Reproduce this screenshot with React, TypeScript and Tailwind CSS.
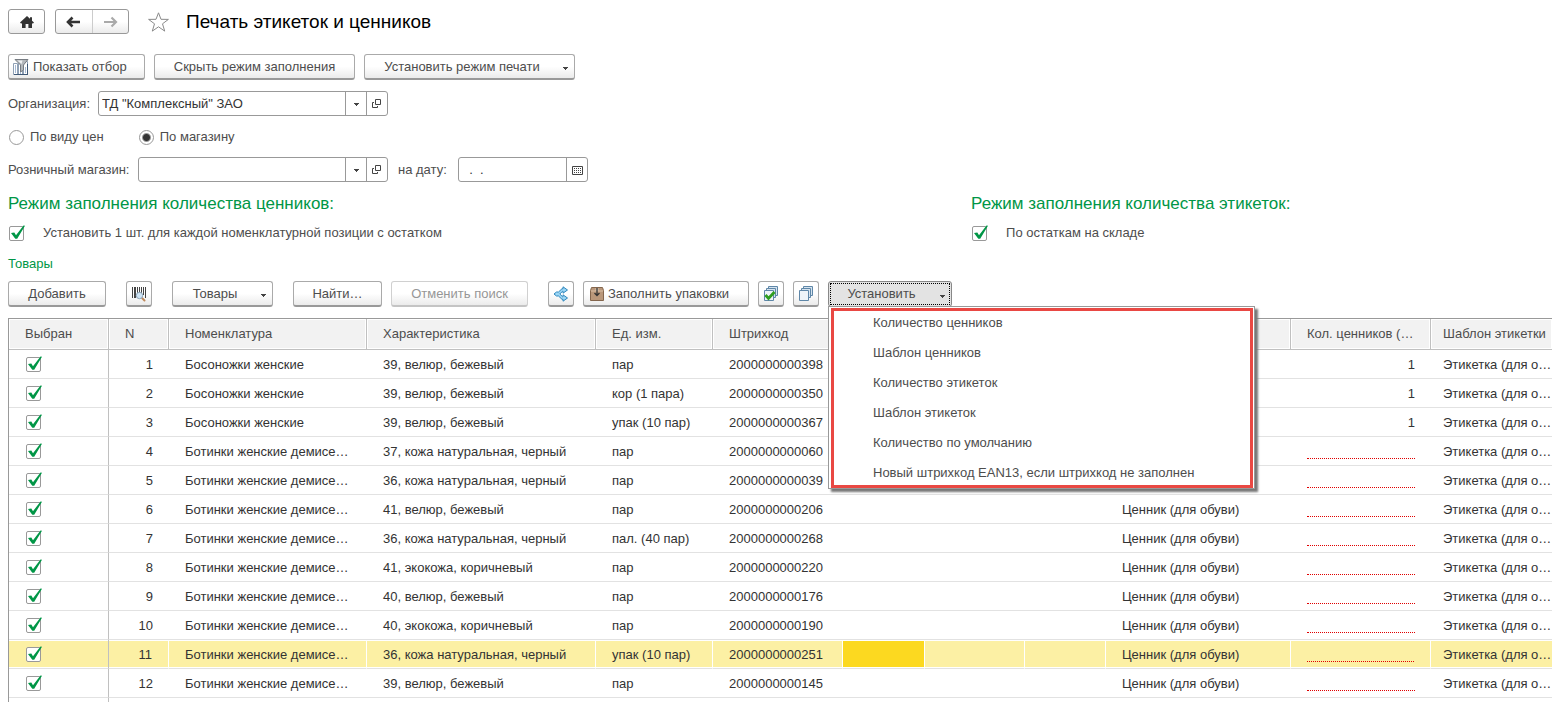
import { ReactNode } from "react";
import clsx from "clsx";

type Item = {
  name: string;
  feature: string;
  unit: string;
  barcode: string;
  tag?: string;
  count?: number;
};

const BOOTS = "Ботинки женские демисе…";
const SANDALS = "Босоножки женские";
const TAG = "Ценник (для обуви)";

const items: Item[] = [
  { name: SANDALS, feature: "39, велюр, бежевый", unit: "пар", barcode: "2000000000398", count: 1 },
  { name: SANDALS, feature: "39, велюр, бежевый", unit: "кор (1 пара)", barcode: "2000000000350", count: 1 },
  { name: SANDALS, feature: "39, велюр, бежевый", unit: "упак (10 пар)", barcode: "2000000000367", count: 1 },
  { name: BOOTS, feature: "37, кожа натуральная, черный", unit: "пар", barcode: "2000000000060" },
  { name: BOOTS, feature: "36, кожа натуральная, черный", unit: "пар", barcode: "2000000000039" },
  { name: BOOTS, feature: "41, велюр, бежевый", unit: "пар", barcode: "2000000000206", tag: TAG },
  { name: BOOTS, feature: "36, кожа натуральная, черный", unit: "пал. (40 пар)", barcode: "2000000000268", tag: TAG },
  { name: BOOTS, feature: "41, экокожа, коричневый", unit: "пар", barcode: "2000000000220", tag: TAG },
  { name: BOOTS, feature: "40, велюр, бежевый", unit: "пар", barcode: "2000000000176", tag: TAG },
  { name: BOOTS, feature: "40, экокожа, коричневый", unit: "пар", barcode: "2000000000190", tag: TAG },
  { name: BOOTS, feature: "36, кожа натуральная, черный", unit: "упак (10 пар)", barcode: "2000000000251", tag: TAG },
  { name: BOOTS, feature: "39, велюр, бежевый", unit: "пар", barcode: "2000000000145", tag: TAG },
];

const SELECTED = 10;

const menuItems = [
  "Количество ценников",
  "Шаблон ценников",
  "Количество этикеток",
  "Шаблон этикеток",
  "Количество по умолчанию",
  "Новый штрихкод EAN13, если штрихкод не заполнен",
];

const columns = [
  { title: "Выбран", width: "w-[100px]" },
  { title: "N", width: "w-[60px]" },
  { title: "Номенклатура", width: "w-[198px]" },
  { title: "Характеристика", width: "w-[229px]" },
  { title: "Ед. изм.", width: "w-[117px]" },
  { title: "Штрихкод", width: "w-[130px]" },
  { title: "", width: "w-[82px]" },
  { title: "", width: "w-[100px]" },
  { title: "", width: "w-[81px]" },
  { title: "", width: "w-[185px]" },
  { title: "Кол. ценников (…", width: "w-[140px]" },
  { title: "Шаблон этикетки", width: "w-auto" },
];

function Caret() {
  return (
    <svg width="5" height="3" viewBox="0 0 5 3" className="shrink-0" aria-hidden="true">
      <path d="M0 0h5v1H4v1H3v1H2V2H1V1H0z" fill="#444" />
    </svg>
  );
}

function HomeIcon() {
  return (
    <svg width="16" height="14" viewBox="0 0 16 14" aria-hidden="true">
      <path d="M8 1 1 7.600l1.200 1.100L3 8v5h3.600V9h2.800v4H13V8l.8.7L15 7.600l-2-1.900V2.200h-2v1.600z" fill="#333" />
    </svg>
  );
}

function ArrowIcon({ right = false }: { right?: boolean }) {
  return (
    <svg width="15" height="12" viewBox="0 0 15 12" aria-hidden="true">
      {right ? (
        <path d="M1 6h11.500M8.500 1.500 13 6l-4.500 4.500" fill="none" stroke="#aaa" strokeWidth="2.200" />
      ) : (
        <path d="M14 6H2.500M6.500 1.500 2 6l4.500 4.500" fill="none" stroke="#333" strokeWidth="2.600" />
      )}
    </svg>
  );
}

function StarIcon() {
  return (
    <svg width="23" height="22" viewBox="0 0 23 22" aria-hidden="true">
      <path
        d="M11.500 1.800 14 8.300l7.400.1-5.900 4.400 2.200 7.300-6.200-4.300-6.200 4.300 2.200-7.300L1.600 8.400 9 8.300z"
        fill="#fff"
        stroke="#8a8a8a"
      />
    </svg>
  );
}

function FilterIcon() {
  return (
    <svg width="16" height="16" viewBox="0 0 16 16" aria-hidden="true">
      <path d="M.5 4.500h4v11h-4zM5.500 4.500h4v11h-4zM10.500 2.500h4v13h-4z" fill="#fff" stroke="#8fa0b5" />
      <path d="M2 7h1M2 9h1M2 11h1M2 13h1M12 9h1M12 11h1M12 13h1M7 14h1" stroke="#4f79ad" />
      <path d="M1 15.500h14M14.500 5v11" stroke="#3f5876" />
      <path d="M2 .5h13L10.500 6v5l-3 2V6z" fill="#b4b8bc" stroke="#777c82" />
      <path d="M4.500 1.500h5L8.500 5z" fill="#eef0f2" />
    </svg>
  );
}

function OpenIcon() {
  return (
    <svg width="10" height="10" viewBox="0 0 10 10" aria-hidden="true">
      <path d="M3.500.5h5v5h-5zM2 3.500H.5v5h5V7" fill="none" stroke="#444" />
    </svg>
  );
}

function CalendarIcon() {
  return (
    <svg width="11" height="9" viewBox="0 0 11 9" aria-hidden="true">
      <path d="M.5.5h10v8H.5z" fill="#fff" stroke="#444" />
      <path d="M2 2.500h7M2 4.500h7M2 6.500h7" stroke="#444" strokeDasharray="1 1" />
    </svg>
  );
}

function BarcodeIcon() {
  return (
    <svg width="16" height="16" viewBox="0 0 16 16" aria-hidden="true">
      <path d="M1 1h1v11H1zM3 1h2v11H3zM6 1h1v9H6zM8 1h1v6H8zM10 1h1v6h-1zM12 1h1v8h-1zM14 1h1v11h-1z" fill="#444" />
      <path d="m11 12 2.500 2.500" stroke="#c08a5c" strokeWidth="2" strokeLinecap="round" />
      <circle cx="8.500" cy="9.500" r="3.200" fill="#cfe5f6" stroke="#8ea5b8" />
    </svg>
  );
}

function ShareIcon() {
  return (
    <svg width="16" height="16" viewBox="0 0 16 16" aria-hidden="true">
      <path
        d="M1 8 3.500 6h2l3.500-3.300h1V.8L14.500 4 10 7.200V5.300H9.500L6.800 8l2.700 2.700h.5V8.800l4.500 3.200-4.500 3.200v-1.900H9L5.500 10h-2z"
        fill="#9bd6f5"
        stroke="#2f86bd"
      />
    </svg>
  );
}

function PackageIcon() {
  return (
    <svg width="14" height="14" viewBox="0 0 14 14" aria-hidden="true">
      <path d="M1.500.5h11l1 3v10H.5v-10z" fill="#b9977a" stroke="#84664d" />
      <path d="M1 4h12" stroke="#d9bfa6" />
      <path d="M5.500 1h3v3h-3z" fill="#d8c5b1" />
      <path d="M7 1v7M4.500 6 7 8.500 9.500 6" fill="none" stroke="#333" strokeWidth="1.300" />
    </svg>
  );
}

function SheetsIcon({ checked = false }: { checked?: boolean }) {
  return (
    <svg width="16" height="16" viewBox="0 0 16 16" aria-hidden="true">
      <path d="M5.500.5h9v9h-9z" fill="#d5e3ef" stroke="#5f87a8" />
      <path d="M3.500 2.500h9v9h-9z" fill="#d5e3ef" stroke="#5f87a8" />
      <path d="M1.500 4.500h9v10h-9z" fill="#eef4f9" stroke="#5f87a8" />
      {checked && <path d="m2.500 9 3 3.500 6-6.500" fill="none" stroke="#2f9e1f" strokeWidth="2.800" />}
    </svg>
  );
}

type ButtonProps = {
  children: ReactNode;
  className?: string;
  label?: string;
  dropdown?: boolean;
  disabled?: boolean;
};

function Button({ children, className, label, dropdown, disabled }: ButtonProps) {
  return (
    <button
      type="button"
      aria-label={label}
      disabled={disabled}
      className={clsx(
        "flex h-[26px] shrink-0 items-center justify-center rounded-[3px] border bg-linear-to-b from-white from-50% to-[#ebebeb]",
        disabled
          ? "border-[#d0d0d0] border-b-2 border-b-[#c4c4c4] text-[#969696]"
          : "border-[#aaa] border-b-2 border-b-[#999]",
        dropdown && "pr-[6px]",
        className,
      )}
    >
      {dropdown ? <span className="grow pr-1">{children}</span> : children}
      {dropdown && (
        <span className="pt-1">
          <Caret />
        </span>
      )}
    </button>
  );
}

function Checkbox({ label, id }: { label?: string; id?: string }) {
  return (
    <span className="relative block size-[15px] shrink-0">
      <input
        type="checkbox"
        id={id}
        aria-label={label}
        defaultChecked
        className="peer block size-[15px] appearance-none rounded-[2px] border border-[#999] bg-white"
      />
      <svg
        width="17"
        height="16"
        viewBox="0 0 17 16"
        className="pointer-events-none absolute -top-px left-0 hidden peer-checked:block"
        aria-hidden="true"
      >
        <path d="M2 8 5.300 7.500 7 10.200 14.500.5 16 .8 8.200 13.800H6.300z" fill="#009646" />
      </svg>
    </span>
  );
}

function Radio({ id, label, checked = false }: { id: string; label: string; checked?: boolean }) {
  return (
    <div className="flex items-center gap-[6px]">
      <input
        type="radio"
        name="price-source"
        id={id}
        defaultChecked={checked}
        className="size-[15px] appearance-none rounded-full border border-[#999] bg-white checked:bg-[radial-gradient(circle,#333_0_3px,#fff_5px)]"
      />
      <label htmlFor={id}>{label}</label>
    </div>
  );
}

type FieldProps = {
  id: string;
  value?: string;
  className: string;
  children: ReactNode;
};

function Field({ id, value, className, children }: FieldProps) {
  return (
    <div className={clsx("flex h-[25px] rounded-[3px] border border-[#999] bg-white", className)}>
      <input
        id={id}
        type="text"
        defaultValue={value}
        className="min-w-0 grow rounded-[3px] bg-transparent px-[3px] whitespace-pre text-[#333] outline-none"
      />
      {children}
    </div>
  );
}

function FieldButton({ label, children }: { label: string; children: ReactNode }) {
  return (
    <button
      type="button"
      aria-label={label}
      className="flex w-[21px] shrink-0 items-center justify-center border-l border-[#999] pt-px"
    >
      {children}
    </button>
  );
}

function ReferenceButtons() {
  return (
    <>
      <FieldButton label="Выбрать">
        <Caret />
      </FieldButton>
      <FieldButton label="Открыть">
        <OpenIcon />
      </FieldButton>
    </>
  );
}

function FillMode({ id, title, option }: { id: string; title: string; option: string }) {
  return (
    <section>
      <h2 className="text-[17px] leading-5 text-[#009646]">{title}</h2>
      <div className="mt-[11px] flex items-center gap-[19px] pl-px">
        <Checkbox id={id} />
        <label htmlFor={id}>{option}</label>
      </div>
    </section>
  );
}

function SetMenu() {
  return (
    <div className="relative">
      <button
        type="button"
        aria-haspopup="menu"
        aria-expanded="true"
        className="flex h-[26px] w-[124px] rounded-[3px] border border-[#888] bg-[#e3e3e3] p-px"
      >
        <span className="flex h-full grow items-center border border-dotted border-black pr-1">
          <span className="grow pr-2">Установить</span>
          <span className="pt-1">
            <Caret />
          </span>
        </span>
      </button>
      <div className="absolute top-[25px] left-0 z-10 w-[427px] border border-[#999] bg-white pt-px pr-px pl-[2px] shadow-[3px_3px_2px_#777]">
        <ul role="menu" className="shadow-[inset_0_0_0_3px_#e94843]">
          {menuItems.map((item) => (
            <li key={item} role="none">
              <button type="button" role="menuitem" className="block h-[30px] w-full pl-[42px] text-left">
                {item}
              </button>
            </li>
          ))}
        </ul>
      </div>
    </div>
  );
}

function Row({ item, index }: { item: Item; index: number }) {
  const selected = index === SELECTED;
  const base = clsx(
    "h-[29px] border-b border-b-[#e2e2e2] whitespace-nowrap",
    selected && "shadow-[inset_0_1px_0_#fff,inset_0_-1px_0_#fff]",
  );
  const cell = clsx(base, "px-4 pt-[2px]", selected && "border-r border-r-white bg-[#fcf0a4]");

  return (
    <tr>
      <td className={clsx(base, "border-r border-r-[#c0c0c0] pl-[17px]", selected && "bg-[#fcf0a4]")}>
        <Checkbox label={`Выбран ${index + 1}`} />
      </td>
      <td className={clsx(cell, "text-right")}>{index + 1}</td>
      <td className={cell}>{item.name}</td>
      <td className={cell}>{item.feature}</td>
      <td className={cell}>{item.unit}</td>
      <td className={cell}>{item.barcode}</td>
      <td className={clsx(base, selected && "border-r border-r-white bg-[#fcd920]")} />
      <td className={cell} />
      <td className={cell} />
      <td className={cell}>{item.tag}</td>
      <td className={clsx(cell, "text-right")}>
        {item.count ?? <span className="block h-[14px] border-b border-dotted border-[#e00000]" />}
      </td>
      <td className={clsx(base, "pt-[2px] pl-3", selected && "bg-[#fcf0a4]")}>Этикетка (для о…</td>
    </tr>
  );
}

export default function App() {
  return (
    <main className="flex h-screen flex-col overflow-hidden bg-white pl-2 font-['Liberation_Sans',Arial,sans-serif] text-[13px] leading-4 text-[#4d4d4d]">
      <header className="flex shrink-0 items-center pt-[9px]">
        <button
          type="button"
          aria-label="Домой"
          className="flex h-[25px] w-[37px] items-center justify-center rounded-[3px] border border-[#999] bg-linear-to-b from-white from-50% to-[#ebebeb]"
        >
          <HomeIcon />
        </button>
        <div className="ml-[10px] flex h-[25px] w-[74px] rounded-[3px] border border-[#999] bg-linear-to-b from-white from-50% to-[#ebebeb]">
          <button type="button" aria-label="Назад" className="flex flex-1 items-center justify-center border-r border-[#ccc]">
            <ArrowIcon />
          </button>
          <button type="button" aria-label="Вперед" className="flex flex-1 items-center justify-center">
            <ArrowIcon right />
          </button>
        </div>
        <button type="button" aria-label="Добавить в избранное" className="ml-[18px]">
          <StarIcon />
        </button>
        <h1 className="ml-4 text-[19px] leading-6 text-black">Печать этикеток и ценников</h1>
      </header>

      <div className="mt-5 flex shrink-0 gap-[9px]">
        <Button className="w-[137px] justify-start gap-1 pl-1">
          <FilterIcon />
          Показать отбор
        </Button>
        <Button className="w-[201px]">Скрыть режим заполнения</Button>
        <Button className="w-[211px]" dropdown>
          Установить режим печати
        </Button>
      </div>

      <div className="mt-[11px] flex shrink-0 items-center">
        <label htmlFor="organization" className="w-[90px]">
          Организация:
        </label>
        <Field id="organization" value={'ТД "Комплексный" ЗАО'} className="w-[290px]">
          <ReferenceButtons />
        </Field>
      </div>

      <div className="mt-[13px] flex shrink-0 gap-[35px] pl-px">
        <Radio id="by-price" label="По виду цен" />
        <Radio id="by-shop" label="По магазину" checked />
      </div>

      <div className="mt-3 flex shrink-0 items-center">
        <label htmlFor="shop" className="w-[130px]">
          Розничный магазин:
        </label>
        <Field id="shop" className="w-[250px]">
          <ReferenceButtons />
        </Field>
        <label htmlFor="date" className="ml-[10px] w-[60px]">
          на дату:
        </label>
        <Field id="date" value="  .  ." className="w-[130px]">
          <FieldButton label="Календарь">
            <CalendarIcon />
          </FieldButton>
        </Field>
      </div>

      <div className="mt-3 grid shrink-0 grid-cols-[63fr_38fr]">
        <FillMode
          id="fill-prices"
          title="Режим заполнения количества ценников:"
          option="Установить 1 шт. для каждой номенклатурной позиции с остатком"
        />
        <FillMode id="fill-labels" title="Режим заполнения количества этикеток:" option="По остаткам на складе" />
      </div>

      <h3 className="mt-[15px] shrink-0 text-[#009646]">Товары</h3>

      <div className="mt-[9px] flex shrink-0 gap-[9px]">
        <Button className="mr-[11px] w-[98px]">Добавить</Button>
        <Button className="mr-[11px] w-[26px]" label="Поиск по штрихкоду">
          <BarcodeIcon />
        </Button>
        <Button className="mr-[11px] w-[101px]" dropdown>
          Товары
        </Button>
        <Button className="w-[89px]">Найти…</Button>
        <Button className="mr-[11px] w-[137px]" disabled>
          Отменить поиск
        </Button>
        <Button className="w-[26px]" label="Разбить строку">
          <ShareIcon />
        </Button>
        <Button className="w-[166px] justify-start gap-1 pl-[6px]">
          <PackageIcon />
          Заполнить упаковки
        </Button>
        <Button className="w-[26px]" label="Выбрать все">
          <SheetsIcon checked />
        </Button>
        <Button className="w-[26px]" label="Снять выбор">
          <SheetsIcon />
        </Button>
        <SetMenu />
      </div>

      <div className="mt-[11px] min-h-0 grow overflow-hidden border-t border-l border-[#999]">
        <table className="w-full min-w-[1543px] table-fixed border-separate border-spacing-0 text-[#333]">
          <thead>
            <tr>
              {columns.map((column, i) => (
                <th
                  key={i}
                  scope="col"
                  className={clsx(
                    "h-[31px] border-r border-b border-[#c0c0c0] bg-[#f2f2f2] pl-4 text-left font-normal whitespace-nowrap text-[#4d4d4d] shadow-[inset_0_0_0_1px_#fff] last:border-r-0 last:pl-3",
                    column.width,
                  )}
                >
                  {column.title}
                </th>
              ))}
            </tr>
          </thead>
          <tbody>
            {items.map((item, i) => (
              <Row key={item.barcode} item={item} index={i} />
            ))}
            <tr>
              <td className="h-[29px] border-r border-[#c0c0c0]" />
              <td colSpan={11} />
            </tr>
          </tbody>
        </table>
      </div>
    </main>
  );
}
